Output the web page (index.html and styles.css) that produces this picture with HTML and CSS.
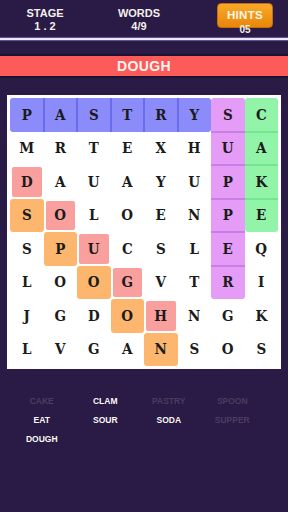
FILE: index.html
```html
<!DOCTYPE html>
<html>
<head>
<meta charset="utf-8">
<link rel="stylesheet" href="styles.css">
</head>
<body>
<div class="screen">
  <header class="top">
    <div class="stat stage"><div>STAGE</div><div>1 . 2</div></div>
    <div class="stat words"><div>WORDS</div><div>4/9</div></div>
    <div class="hints">
      <div class="hint-btn">HINTS</div>
      <div class="hint-count">05</div>
    </div>
  </header>
  <div class="divider"></div>
  <div class="banner">DOUGH</div>
  <div class="board">
    <div class="cell hl blue jr">P</div><div class="cell hl blue jl jr">A</div><div class="cell hl blue jl jr">S</div><div class="cell hl blue jl jr">T</div><div class="cell hl blue jl jr">R</div><div class="cell hl blue jl">Y</div><div class="cell hl purple jb">S</div><div class="cell hl green jb">C</div>
    <div class="cell">M</div><div class="cell">R</div><div class="cell">T</div><div class="cell">E</div><div class="cell">X</div><div class="cell">H</div><div class="cell hl purple jt jb">U</div><div class="cell hl green jt jb">A</div>
    <div class="cell hl pink">D</div><div class="cell">A</div><div class="cell">U</div><div class="cell">A</div><div class="cell">Y</div><div class="cell">U</div><div class="cell hl purple jt jb">P</div><div class="cell hl green jt jb">K</div>
    <div class="cell hl orange">S</div><div class="cell hl pink">O</div><div class="cell">L</div><div class="cell">O</div><div class="cell">E</div><div class="cell">N</div><div class="cell hl purple jt jb">P</div><div class="cell hl green jt">E</div>
    <div class="cell">S</div><div class="cell hl orange">P</div><div class="cell hl pink">U</div><div class="cell">C</div><div class="cell">S</div><div class="cell">L</div><div class="cell hl purple jt jb">E</div><div class="cell">Q</div>
    <div class="cell">L</div><div class="cell">O</div><div class="cell hl orange">O</div><div class="cell hl pink">G</div><div class="cell">V</div><div class="cell">T</div><div class="cell hl purple jt">R</div><div class="cell">I</div>
    <div class="cell">J</div><div class="cell">G</div><div class="cell">D</div><div class="cell hl orange">O</div><div class="cell hl pink">H</div><div class="cell">N</div><div class="cell">G</div><div class="cell">K</div>
    <div class="cell">L</div><div class="cell">V</div><div class="cell">G</div><div class="cell">A</div><div class="cell hl orange">N</div><div class="cell">S</div><div class="cell">O</div><div class="cell">S</div>
  </div>
  <div class="wordlist">
    <div class="w found">CAKE</div><div class="w">CLAM</div><div class="w found">PASTRY</div><div class="w found">SPOON</div>
    <div class="w">EAT</div><div class="w">SOUR</div><div class="w">SODA</div><div class="w found">SUPPER</div>
    <div class="w">DOUGH</div>
  </div>
</div>
</body>
</html>
```
FILE: styles.css
```css
* { box-sizing: border-box; }
html, body {
  margin: 0;
  padding: 0;
  background: #2a1a46;
}
body {
  width: 288px;
  height: 512px;
  overflow: hidden;
  font-family: "Liberation Sans", Arial, sans-serif;
  color: #f3f0ea;
}
.screen {
  display: flex;
  flex-direction: column;
}
.top {
  display: flex;
  height: 38px;
}
.stat {
  padding-top: 7px;
  font-size: 11px;
  font-weight: bold;
  line-height: 12.5px;
  text-align: center;
}
.stage { width: 90px; }
.words { width: 98px; }
.hints {
  margin-left: auto;
  margin-right: 15px;
  width: 56px;
  display: flex;
  flex-direction: column;
  align-items: center;
}
.hint-btn {
  margin-top: 3px;
  width: 56px;
  height: 25px;
  border-radius: 4px;
  border: 1px solid #c06f0c;
  background: linear-gradient(#f9a927, #e8860c);
  font-size: 11.5px;
  font-weight: bold;
  line-height: 23px;
  text-align: center;
  color: #fff6e6;
  letter-spacing: 0.3px;
}
.hint-count {
  margin-top: -3px;
  font-size: 10px;
  font-weight: bold;
  line-height: 10px;
}
.divider {
  height: 2px;
  background: #ece8f6;
  box-shadow: 0 0 1px 1px rgba(160, 150, 220, 0.5);
}
.banner {
  margin-top: 14px;
  height: 24px;
  border-top: 2px solid #1c1232;
  border-bottom: 2px solid #1c1232;
  background: #fc5b5a;
  font-size: 14px;
  font-weight: bold;
  line-height: 20px;
  text-align: center;
  color: #fff4f0;
  letter-spacing: 0.4px;
}
.board {
  margin: 17px 0 0 7px;
  width: 274px;
  padding: 3px;
  background: #ffffff;
  display: grid;
  grid-template-columns: repeat(8, 33.5px);
  grid-auto-rows: 33.5px;
}
.cell {
  display: flex;
  align-items: center;
  justify-content: center;
  font-family: "DejaVu Serif Condensed", "DejaVu Serif", serif;
  font-stretch: condensed;
  font-weight: bold;
  font-size: 15px;
  color: #1b1b1b;
}
.hl {
  border-radius: 3px;
  box-shadow: var(--sl, 0 0 0 transparent), var(--sr, 0 0 0 transparent), var(--st, 0 0 0 transparent), var(--sb, 0 0 0 transparent);
}
.blue { background: #8b8bfa; --d: #6b6bef; }
.purple { background: #e49cf6; --d: #c97de6; }
.green { background: #92f4a9; --d: #72e78f; }
.orange { background: #fdb66d; }
.pink {
  background: #f9a09e;
  border: 2px solid transparent;
  background-clip: padding-box;
  border-radius: 4px;
}
.jr { --sr: inset -1px 0 0 var(--d); border-top-right-radius: 0; border-bottom-right-radius: 0; }
.jl { --sl: inset 1px 0 0 var(--d); border-top-left-radius: 0; border-bottom-left-radius: 0; }
.jb { --sb: inset 0 -1px 0 var(--d); border-bottom-left-radius: 0; border-bottom-right-radius: 0; }
.jt { --st: inset 0 1px 0 var(--d); border-top-left-radius: 0; border-top-right-radius: 0; }
.wordlist {
  margin: 23px 0 0 10px;
  width: 254px;
  display: grid;
  grid-template-columns: repeat(4, 1fr);
  grid-auto-rows: 19px;
}
.w {
  font-size: 8.5px;
  font-weight: bold;
  line-height: 19px;
  text-align: center;
  color: #fbf8f2;
}
.w.found { color: #4a3d5e; }
```
